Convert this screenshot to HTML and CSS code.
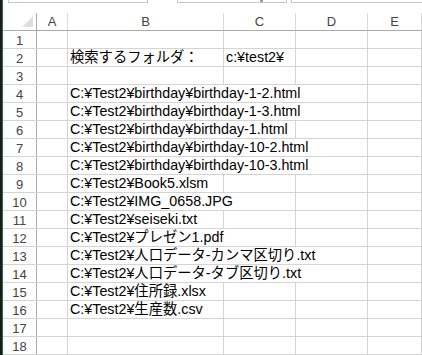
FILE: index.html
```html
<!DOCTYPE html>
<html lang="ja">
  <head>
    <meta charset="UTF-8" />
    <title>Sheet1</title>
    <link rel="stylesheet" href="styles.css">
  </head>
  <body>
    <div class="screen">
      <div class="edge"></div>
      <div class="sheet">
        <div class="ribbon-bottom">
          <div class="fbox namebox"></div>
          <div class="fbox fxbox"><span class="arrow"></span></div>
          <div class="fbox formula"></div>
        </div>

        <div class="row head">
          <div class="rh corner"><span class="tri"></span></div>
          <div class="ch a">A</div>
          <div class="ch b">B</div>
          <div class="ch c">C</div>
          <div class="ch d">D</div>
          <div class="ch e">E</div>
        </div>

        <div class="row"><div class="rh">1</div><div class="cell a"></div><div class="cell b"></div><div class="cell c"></div><div class="cell d"></div><div class="cell e"></div></div>
        <div class="row"><div class="rh">2</div><div class="cell a"></div><div class="cell b">検索するフォルダ：</div><div class="cell c">c:¥test2¥</div><div class="cell d"></div><div class="cell e"></div></div>
        <div class="row"><div class="rh">3</div><div class="cell a"></div><div class="cell b"></div><div class="cell c"></div><div class="cell d"></div><div class="cell e"></div></div>
        <div class="row"><div class="rh">4</div><div class="cell a"></div><div class="cell b span3">C:¥Test2¥birthday¥birthday-1-2.html</div><div class="cell e"></div></div>
        <div class="row"><div class="rh">5</div><div class="cell a"></div><div class="cell b span3">C:¥Test2¥birthday¥birthday-1-3.html</div><div class="cell e"></div></div>
        <div class="row"><div class="rh">6</div><div class="cell a"></div><div class="cell b span2">C:¥Test2¥birthday¥birthday-1.html</div><div class="cell d"></div><div class="cell e"></div></div>
        <div class="row"><div class="rh">7</div><div class="cell a"></div><div class="cell b span3">C:¥Test2¥birthday¥birthday-10-2.html</div><div class="cell e"></div></div>
        <div class="row"><div class="rh">8</div><div class="cell a"></div><div class="cell b span3">C:¥Test2¥birthday¥birthday-10-3.html</div><div class="cell e"></div></div>
        <div class="row"><div class="rh">9</div><div class="cell a"></div><div class="cell b">C:¥Test2¥Book5.xlsm</div><div class="cell c"></div><div class="cell d"></div><div class="cell e"></div></div>
        <div class="row"><div class="rh">10</div><div class="cell a"></div><div class="cell b span2">C:¥Test2¥IMG_0658.JPG</div><div class="cell d"></div><div class="cell e"></div></div>
        <div class="row"><div class="rh">11</div><div class="cell a"></div><div class="cell b">C:¥Test2¥seiseki.txt</div><div class="cell c"></div><div class="cell d"></div><div class="cell e"></div></div>
        <div class="row"><div class="rh">12</div><div class="cell a"></div><div class="cell b span2">C:¥Test2¥プレゼン1.pdf</div><div class="cell d"></div><div class="cell e"></div></div>
        <div class="row"><div class="rh">13</div><div class="cell a"></div><div class="cell b span3">C:¥Test2¥人口データ-カンマ区切り.txt</div><div class="cell e"></div></div>
        <div class="row"><div class="rh">14</div><div class="cell a"></div><div class="cell b span3">C:¥Test2¥人口データ-タブ区切り.txt</div><div class="cell e"></div></div>
        <div class="row"><div class="rh">15</div><div class="cell a"></div><div class="cell b">C:¥Test2¥住所録.xlsx</div><div class="cell c"></div><div class="cell d"></div><div class="cell e"></div></div>
        <div class="row"><div class="rh">16</div><div class="cell a"></div><div class="cell b">C:¥Test2¥生産数.csv</div><div class="cell c"></div><div class="cell d"></div><div class="cell e"></div></div>
        <div class="row"><div class="rh">17</div><div class="cell a"></div><div class="cell b"></div><div class="cell c"></div><div class="cell d"></div><div class="cell e"></div></div>
        <div class="row"><div class="rh">18</div><div class="cell a"></div><div class="cell b"></div><div class="cell c"></div><div class="cell d"></div><div class="cell e"></div></div>
      </div>
    </div>
  </body>
</html>
```

FILE: styles.css
```css
html, body {
  margin: 0;
  padding: 0;
  background: #ffffff;
  overflow: hidden;
}

.screen {
  display: flex;
  width: 422px;
  height: 355px;
  overflow: hidden;
}

.edge {
  width: 2px;
  flex: none;
  background-color: #1b1b1b;
  border-right: 1px solid #217346;
}

.sheet {
  flex: 1;
  min-width: 0;
}

/* bottom of the name box / formula bar */
.ribbon-bottom {
  display: flex;
  height: 13px;
  align-items: flex-start;
}

.fbox {
  height: 3px;
  box-sizing: border-box;
  border: 1px solid #c6c6c6;
  border-top: none;
}

.namebox {
  margin-left: 5px;
  width: 140px;
}

.fxbox {
  margin-left: 29px;
  width: 110px;
  position: relative;
}

.arrow {
  position: absolute;
  left: 82px;
  top: 0;
  width: 3px;
  height: 2px;
  background-color: #9a9a9a;
}

.formula {
  margin-left: 4px;
  flex: 1;
  border-right: none;
}

/* grid */
.row {
  display: flex;
  height: 18px;
  box-sizing: border-box;
  border-bottom: 1px solid #d4d4d4;
}

.row.head {
  border-bottom: 1px solid #ababab;
}

.rh, .ch, .cell {
  flex: none;
  box-sizing: border-box;
  border-right: 1px solid #d4d4d4;
}

.rh {
  width: 34px;
  border-right-color: #ababab;
  display: flex;
  align-items: center;
  justify-content: center;
  font-family: "Liberation Sans", Arial, sans-serif;
  font-size: 13px;
  color: #444444;
  padding-top: 1px;
}

.ch {
  display: flex;
  align-items: center;
  justify-content: center;
  font-family: "Liberation Sans", Arial, sans-serif;
  font-size: 13px;
  color: #444444;
  border-right-color: #dadada;
}

.corner {
  justify-content: flex-end;
  align-items: flex-end;
  padding: 0 3px 3px 0;
}

.tri {
  width: 0;
  height: 0;
  border-left: 11px solid transparent;
  border-bottom: 11px solid #dfdfdf;
}

.a { width: 31px; }
.b { width: 156px; }
.c { width: 72px; }
.d { width: 72px; }
.e { flex: 1; }
.b.span2 { width: 228px; }
.b.span3 { width: 300px; }

.cell {
  display: flex;
  align-items: flex-end;
  padding-left: 2px;
  white-space: nowrap;
  font-family: "Liberation Sans", "Noto Sans CJK JP", sans-serif;
  font-size: 14.3px;
  line-height: 17px;
  color: #000000;
}
```
